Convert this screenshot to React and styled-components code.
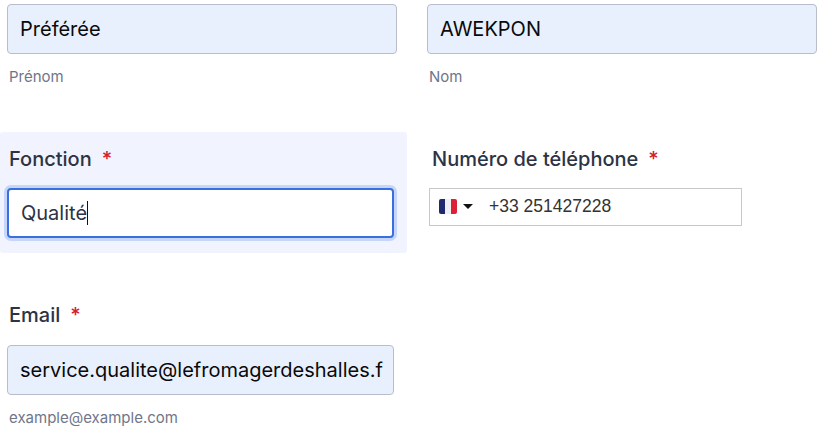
import React from 'react'
import styled, { createGlobalStyle } from 'styled-components'

const GlobalStyle = createGlobalStyle`
  html, body {
    margin: 0;
    background: #ffffff;
    font-family: Inter, "Liberation Sans", sans-serif;
  }
`

const Page = styled.div`
  width: 818px;
  height: 430px;
  overflow: hidden;
  padding-top: 4px;
  box-sizing: border-box;
`

const Row = styled.div`
  display: grid;
  grid-template-columns: 407px 411px;
  margin-bottom: ${({ $gap }) => $gap || 0}px;
`

const Cell = styled.div`
  padding: ${({ $padding }) => $padding};
  background: ${({ $focused }) => ($focused ? '#f1f3fe' : 'transparent')};
  border-radius: ${({ $focused }) => ($focused ? '3px' : '0')};
`

const Label = styled.label`
  display: block;
  font-size: 20px;
  line-height: 22px;
  font-weight: 500;
  color: #2c3345;
  margin: 0 0 ${({ $bottom }) => $bottom}px 2px;
`

const Star = styled.span`
  color: #d3202c;
  margin-left: 10px;
`

const Input = styled.div`
  display: flex;
  align-items: center;
  box-sizing: border-box;
  height: 50px;
  padding: 0 12px;
  font-size: 20px;
  white-space: nowrap;
  border-radius: 4px;
  color: ${({ $focused }) => ($focused ? '#2c3345' : '#0a0a0a')};
  background: ${({ $focused }) => ($focused ? '#ffffff' : '#e8f0fe')};
  border: ${({ $focused }) => ($focused ? '2px solid #3a6fe0' : '1px solid #b8bdc9')};
  box-shadow: ${({ $focused }) => ($focused ? '0 0 0 3px #c6d6fb' : 'none')};
`

const Caret = styled.span`
  flex: none;
  width: 1px;
  height: 24px;
  background: #111111;
`

const Sub = styled.div`
  font-size: 15px;
  line-height: 18px;
  color: #6f7689;
  margin: 14px 0 0 2px;
`

const PhoneBox = styled.div`
  display: flex;
  align-items: center;
  box-sizing: border-box;
  width: 313px;
  height: 38px;
  margin-left: -1px;
  padding: 0 0 2px 9px;
  border: 1px solid #c8c8c8;
  background: #ffffff;
  font-family: "Liberation Sans", Arial, sans-serif;
  font-size: 17.5px;
  color: #333333;
`

const FlagWrap = styled.span`
  display: flex;
  align-items: center;
  gap: 6px;
  margin-right: 16px;
`

const FlagSvg = styled.svg`
  filter: blur(0.5px);
`

const Flag = () => (
  <FlagSvg width="18" height="15" viewBox="0 0 18 15">
    <path d="M2 0h4v15H2a2 2 0 0 1-2-2V2a2 2 0 0 1 2-2z" fill="#20296e" />
    <rect x="6" y="0" width="6" height="15" fill="#f0eef2" />
    <path d="M12 0h4a2 2 0 0 1 2 2v11a2 2 0 0 1-2 2h-4z" fill="#dc2036" />
  </FlagSvg>
)

const Arrow = () => (
  <svg width="10" height="5" viewBox="0 0 10 5">
    <path d="M0 0h10L5 5z" fill="#111111" />
  </svg>
)

const App = () => {
  return (
    <Page>
      <GlobalStyle />
      <Row $gap={46}>
        <Cell $padding="0 10px 0 7px">
          <Input>Préférée</Input>
          <Sub>Prénom</Sub>
        </Cell>
        <Cell $padding="0 1px 0 20px">
          <Input>AWEKPON</Input>
          <Sub>Nom</Sub>
        </Cell>
      </Row>
      <Row $gap={40}>
        <Cell $focused $padding="16px 13px 15px 7px">
          <Label $bottom={18}>Fonction<Star>*</Star></Label>
          <Input $focused>Qualité<Caret /></Input>
        </Cell>
        <Cell $padding="16px 0 0 23px">
          <Label $bottom={18}>Numéro de téléphone<Star>*</Star></Label>
          <PhoneBox>
            <FlagWrap><Flag /><Arrow /></FlagWrap>
            +33 251427228
          </PhoneBox>
        </Cell>
      </Row>
      <Row>
        <Cell $padding="11px 13px 0 7px">
          <Label $bottom={19}>Email<Star>*</Star></Label>
          <Input>service.qualite@lefromagerdeshalles.f</Input>
          <Sub>example@example.com</Sub>
        </Cell>
      </Row>
    </Page>
  )
}

export default App
